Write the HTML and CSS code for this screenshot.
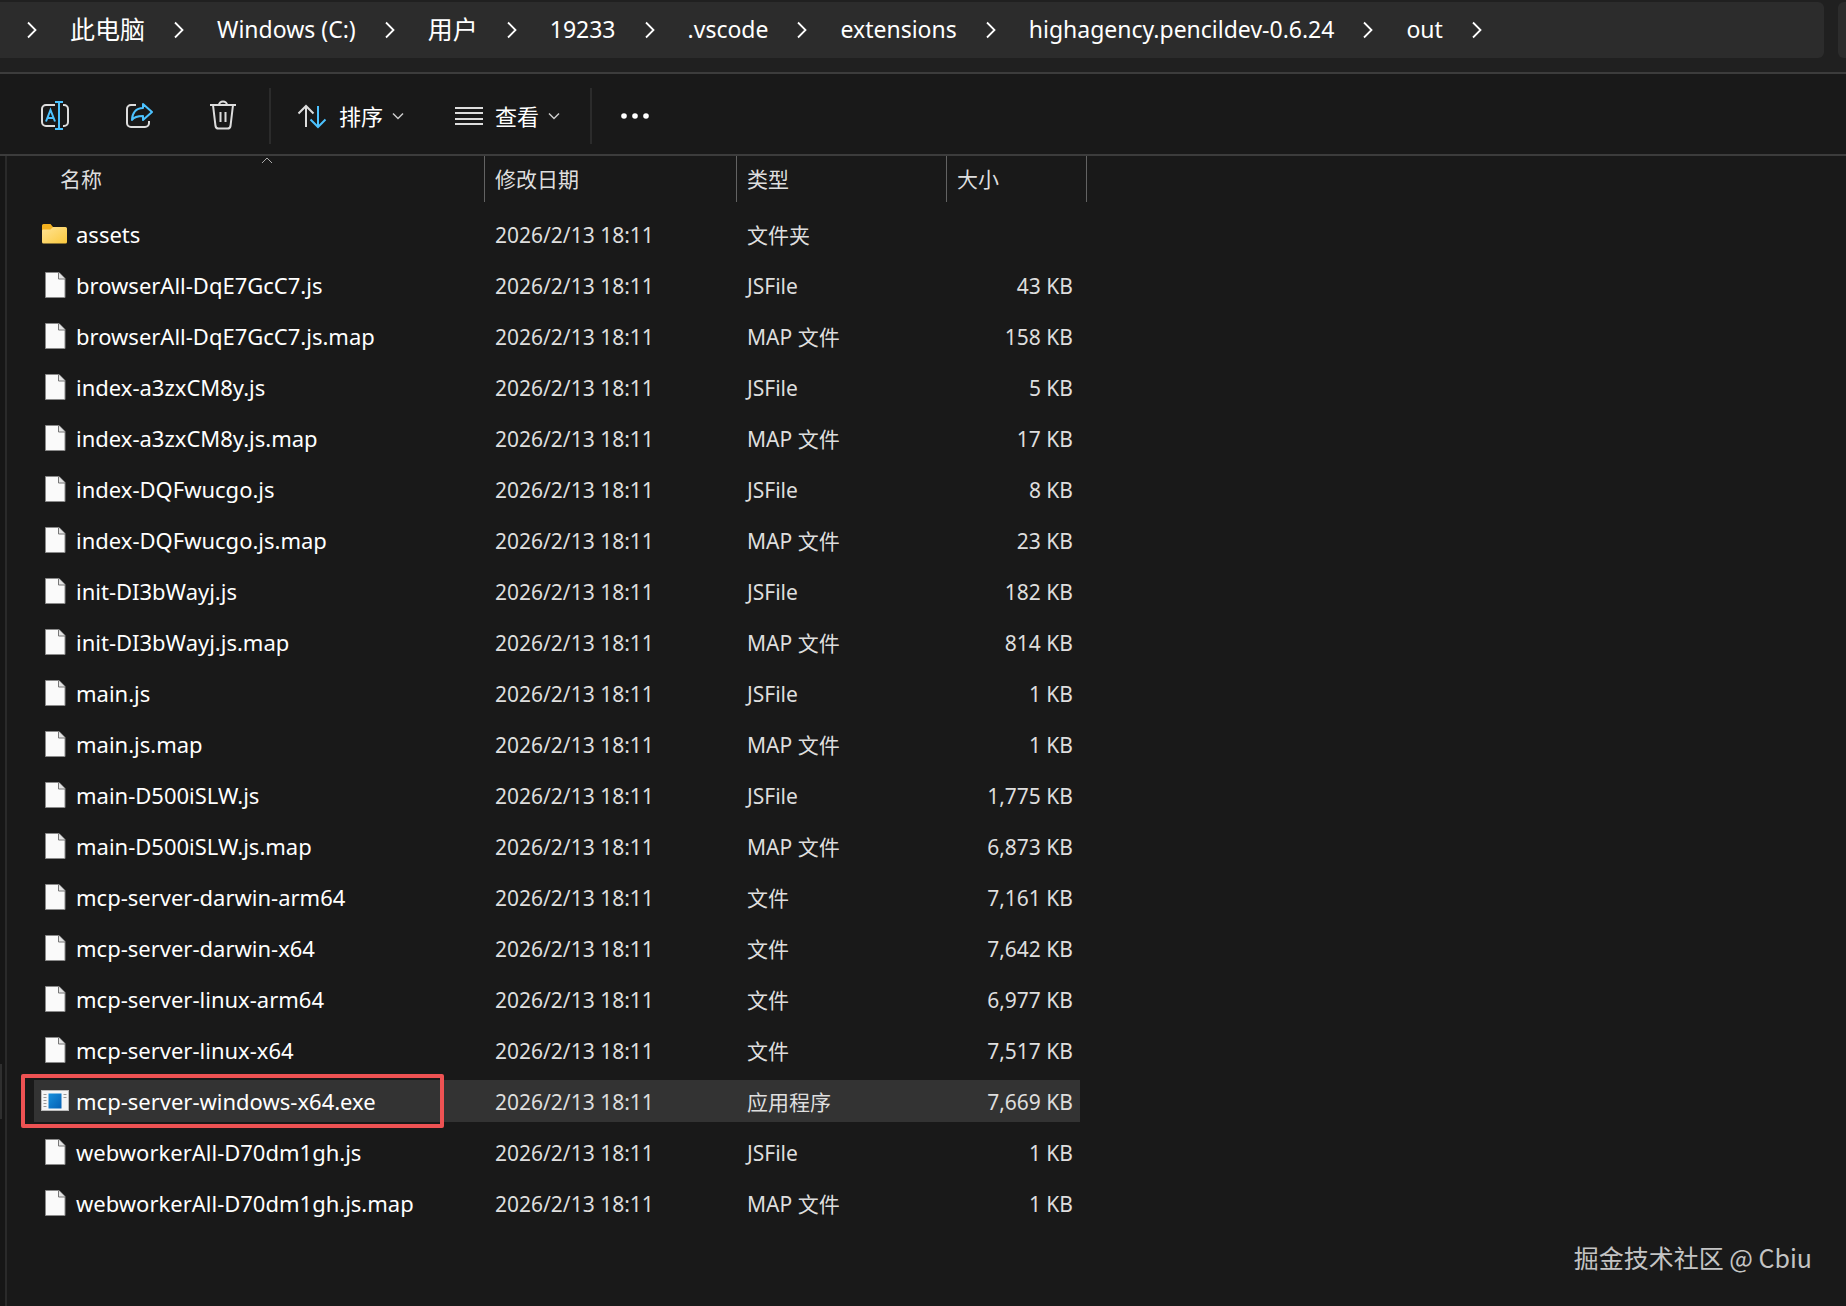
FILE: index.html
```
<!DOCTYPE html>
<html lang="zh-CN">
<head>
    <meta charset="UTF-8">
    <meta name="viewport" content="width=device-width, initial-scale=1.0">
    <title>out</title>
    <link rel="stylesheet" href="styles.css">
</head>
<body>
    <!-- icons shared by the rows and the path -->
    <svg class="sprite" aria-hidden="true">
        <symbol id="chevron" viewBox="0 0 10 18"><path d="M1 1.500L8.500 9L1 16.500" fill="none" stroke="#fff" stroke-width="1.800"/></symbol>
        <symbol id="down" viewBox="0 0 12 8"><path d="M1 1.500L6 6.500L11 1.500" fill="none" stroke="#ccc" stroke-width="1.500"/></symbol>
        <symbol id="file" viewBox="0 0 28 28">
            <path d="M4.500 1.500H18L24 7.500V26.500H4.500Z" fill="#fafafa" stroke="#8a8a8a"/>
            <path d="M17.500 1.500V8H24" fill="#e4e4e4" stroke="#777"/>
        </symbol>
        <symbol id="folder" viewBox="0 0 28 28">
            <path d="M1 5.500a1.500 1.500 0 0 1 1.500-1.500H9.500L12 7H24V14H1Z" fill="#f3b11f"/>
            <path d="M1 10.500a1.500 1.500 0 0 1 1.500-1H9.500L12 7H24.500A1.500 1.500 0 0 1 26 8.500V22a1.500 1.500 0 0 1-1.500 1.500h-22A1.500 1.500 0 0 1 1 22Z" fill="url(#fold)"/>
        </symbol>
        <symbol id="exe" viewBox="0 0 28 28">
            <rect x=".5" y="3.500" width="27" height="20" fill="#f5f5f5" stroke="#bbb"/>
            <rect x="7.500" y="6.500" width="13" height="15" fill="url(#blue)"/>
            <path d="M2.500 7.500h3M2.500 10.500h3M2.500 13.500h3M2.500 16.500h3M2.500 19.500h3M22.500 7.500h3M22.500 10.500h3" stroke="#999"/>
        </symbol>
        <linearGradient id="fold" x1="0" y1="0" x2="1" y2="1"><stop offset="0" stop-color="#ffe394"/><stop offset="1" stop-color="#fbc93d"/></linearGradient>
        <linearGradient id="blue" x1="0" y1="0" x2="1" y2="1"><stop offset="0" stop-color="#1890dc"/><stop offset="1" stop-color="#0560b4"/></linearGradient>
    </svg>

    <header class="address">
        <nav class="path">
            <svg class="sep"><use href="#chevron"/></svg>
            <a class="cn" href="#">此电脑</a><svg class="sep"><use href="#chevron"/></svg>
            <a href="#">Windows (C:)</a><svg class="sep"><use href="#chevron"/></svg>
            <a class="cn" href="#">用户</a><svg class="sep"><use href="#chevron"/></svg>
            <a href="#">19233</a><svg class="sep"><use href="#chevron"/></svg>
            <a href="#">.vscode</a><svg class="sep"><use href="#chevron"/></svg>
            <a href="#">extensions</a><svg class="sep"><use href="#chevron"/></svg>
            <a href="#">highagency.pencildev-0.6.24</a><svg class="sep"><use href="#chevron"/></svg>
            <a href="#">out</a><svg class="sep"><use href="#chevron"/></svg>
        </nav>
        <div class="search"></div>
    </header>

    <div class="toolbar">
        <button class="tool" aria-label="重命名">
            <svg width="30" height="34" viewBox="0 0 30 34" fill="none" stroke="#ddd" stroke-width="2">
                <path d="M15 6H6a4 4 0 0 0-4 4V23a4 4 0 0 0 4 4H15M23 6h1a4 4 0 0 1 4 4V23a4 4 0 0 1-4 4H23"/>
                <path d="M6 22.500L10.500 11L15 22.500M7.500 19H13.500M15 3H23M15 30H23M19 3V30" stroke="#4cc2ff"/>
            </svg>
        </button>
        <button class="tool" aria-label="共享">
            <svg width="30" height="34" viewBox="0 0 30 34" fill="none" stroke="#ddd" stroke-width="2">
                <path d="M12 6H7a4 4 0 0 0-4 4V24a4 4 0 0 0 4 4H21a4 4 0 0 0 4-4V22"/>
                <path d="M19 5L28 13L19 21V17C14 17 10 18 8 21C8 14 12 9 19 9Z" stroke="#4cc2ff" stroke-linejoin="round"/>
            </svg>
        </button>
        <button class="tool" aria-label="删除">
            <svg width="30" height="34" viewBox="0 0 30 34" fill="none" stroke="#ddd" stroke-width="2">
                <path d="M2 6H28M5 6L7.500 27a3 3 0 0 0 3 2.500H19.500a3 3 0 0 0 3-2.500L25 6M11 6a4 3.500 0 0 1 8 0M12.500 13V23M17.500 13V23"/>
            </svg>
        </button>
        <span class="line"></span>
        <button class="menu sort">
            <svg width="30" height="28" viewBox="0 0 30 28" fill="none" stroke="#ddd" stroke-width="2">
                <path d="M9 25V4M1.500 11.500L9 4L16.500 11.500"/>
                <path d="M21 4V25M13.500 17.500L21 25L28.500 17.500" stroke="#4cc2ff"/>
            </svg>
            排序
            <svg class="down"><use href="#down"/></svg>
        </button>
        <button class="menu view">
            <svg width="28" height="20" viewBox="0 0 28 20" stroke="#ddd" stroke-width="2"><path d="M0 2H28M0 7H28M0 13H28M0 18H28"/></svg>
            查看
            <svg class="down"><use href="#down"/></svg>
        </button>
        <span class="line"></span>
        <button class="more" aria-label="更多">
            <svg width="30" height="6" viewBox="0 0 30 6" fill="#fff"><circle cx="4" cy="3" r="2.800"/><circle cx="15" cy="3" r="2.800"/><circle cx="26" cy="3" r="2.800"/></svg>
        </button>
    </div>

    <main class="content">
        <div class="pane"><div class="thumb"></div></div>
        <table class="files">
            <colgroup><col class="c-name"><col class="c-date"><col class="c-type"><col class="c-size"></colgroup>
            <thead>
                <tr>
                    <th><button class="first">名称<svg class="asc" viewBox="0 0 12 8"><path d="M1 7L6 2L11 7" fill="none" stroke="#aaa"/></svg></button></th>
                    <th><button>修改日期</button></th>
                    <th><button>类型</button></th>
                    <th><button>大小</button></th>
                </tr>
            </thead>
            <tbody>
                <tr><td><svg class="icon"><use href="#folder"/></svg>assets</td><td>2026/2/13 18:11</td><td>文件夹</td><td></td></tr>
                <tr><td><svg class="icon"><use href="#file"/></svg>browserAll-DqE7GcC7.js</td><td>2026/2/13 18:11</td><td>JSFile</td><td>43 KB</td></tr>
                <tr><td><svg class="icon"><use href="#file"/></svg>browserAll-DqE7GcC7.js.map</td><td>2026/2/13 18:11</td><td>MAP 文件</td><td>158 KB</td></tr>
                <tr><td><svg class="icon"><use href="#file"/></svg>index-a3zxCM8y.js</td><td>2026/2/13 18:11</td><td>JSFile</td><td>5 KB</td></tr>
                <tr><td><svg class="icon"><use href="#file"/></svg>index-a3zxCM8y.js.map</td><td>2026/2/13 18:11</td><td>MAP 文件</td><td>17 KB</td></tr>
                <tr><td><svg class="icon"><use href="#file"/></svg>index-DQFwucgo.js</td><td>2026/2/13 18:11</td><td>JSFile</td><td>8 KB</td></tr>
                <tr><td><svg class="icon"><use href="#file"/></svg>index-DQFwucgo.js.map</td><td>2026/2/13 18:11</td><td>MAP 文件</td><td>23 KB</td></tr>
                <tr><td><svg class="icon"><use href="#file"/></svg>init-DI3bWayj.js</td><td>2026/2/13 18:11</td><td>JSFile</td><td>182 KB</td></tr>
                <tr><td><svg class="icon"><use href="#file"/></svg>init-DI3bWayj.js.map</td><td>2026/2/13 18:11</td><td>MAP 文件</td><td>814 KB</td></tr>
                <tr><td><svg class="icon"><use href="#file"/></svg>main.js</td><td>2026/2/13 18:11</td><td>JSFile</td><td>1 KB</td></tr>
                <tr><td><svg class="icon"><use href="#file"/></svg>main.js.map</td><td>2026/2/13 18:11</td><td>MAP 文件</td><td>1 KB</td></tr>
                <tr><td><svg class="icon"><use href="#file"/></svg>main-D500iSLW.js</td><td>2026/2/13 18:11</td><td>JSFile</td><td>1,775 KB</td></tr>
                <tr><td><svg class="icon"><use href="#file"/></svg>main-D500iSLW.js.map</td><td>2026/2/13 18:11</td><td>MAP 文件</td><td>6,873 KB</td></tr>
                <tr><td><svg class="icon"><use href="#file"/></svg>mcp-server-darwin-arm64</td><td>2026/2/13 18:11</td><td>文件</td><td>7,161 KB</td></tr>
                <tr><td><svg class="icon"><use href="#file"/></svg>mcp-server-darwin-x64</td><td>2026/2/13 18:11</td><td>文件</td><td>7,642 KB</td></tr>
                <tr><td><svg class="icon"><use href="#file"/></svg>mcp-server-linux-arm64</td><td>2026/2/13 18:11</td><td>文件</td><td>6,977 KB</td></tr>
                <tr><td><svg class="icon"><use href="#file"/></svg>mcp-server-linux-x64</td><td>2026/2/13 18:11</td><td>文件</td><td>7,517 KB</td></tr>
                <tr class="selected"><td><svg class="icon"><use href="#exe"/></svg>mcp-server-windows-x64.exe<span class="mark"></span></td><td>2026/2/13 18:11</td><td>应用程序</td><td>7,669 KB</td></tr>
                <tr><td><svg class="icon"><use href="#file"/></svg>webworkerAll-D70dm1gh.js</td><td>2026/2/13 18:11</td><td>JSFile</td><td>1 KB</td></tr>
                <tr><td><svg class="icon"><use href="#file"/></svg>webworkerAll-D70dm1gh.js.map</td><td>2026/2/13 18:11</td><td>MAP 文件</td><td>1 KB</td></tr>
            </tbody>
        </table>
    </main>
    <div class="watermark">掘金技术社区 @ Cbiu</div>
</body>
</html>
```
FILE: styles.css
```
* { box-sizing: border-box; }
body { display: flex; flex-direction: column; min-height: 100vh; margin: 0; background: #191919; color: #fff; font: 21px/28px "Noto Sans", "Noto Sans CJK SC", sans-serif; }
button { padding: 0; border: 0; background: none; color: inherit; font: inherit; }
svg { flex: none; }
.sprite { position: absolute; width: 0; height: 0; }

.address { display: flex; gap: 14px; height: 74px; padding-top: 2px; background: #202020; border-bottom: 2px solid #3c3c3c; }
.path { display: flex; align-items: center; flex: 1; height: 56px; padding-left: 27px; background: #2c2c2c; border-radius: 0 6px 6px 0; font-size: 23px; white-space: nowrap; }
.path a { padding: 0 29px 2px 33px; color: inherit; text-decoration: none; }
.path .cn { font-size: 25px; }
.sep { width: 10px; height: 18px; }
.search { width: 8px; height: 56px; background: #2c2c2c; border-radius: 6px 0 0 6px; }

.toolbar { display: flex; align-items: center; height: 82px; padding: 4px 0 0 40px; border-bottom: 2px solid #3c3c3c; font-size: 22px; }
.tool { width: 30px; height: 34px; margin-right: 54px; }
.tool svg { display: block; }
.line { width: 2px; height: 56px; background: #2b2b2b; }
.tool + .line { margin-left: -23px; }
.menu { display: flex; align-items: center; }
.menu svg:first-child { margin-right: 12px; }
.down { width: 12px; height: 8px; margin-left: 9px; }
.sort { margin: 0 51px 0 26px; }
.view { margin-right: 30px; }
.more { display: flex; margin-left: 28px; }

.content { display: flex; align-items: stretch; flex: 1; }
.pane { flex: none; width: 7px; margin-right: 27px; background: #161616; border-right: 2px solid #2a2a2a; }
.thumb { width: 2px; height: 55px; margin-top: 908px; background: #2f2f2f; }
.files { width: 1053px; height: 0; table-layout: fixed; border-collapse: separate; border-spacing: 0; }
.c-name { width: 451px; }
.c-date { width: 252px; }
.c-type { width: 210px; }
.c-size { width: 140px; }
.files th { height: 53px; padding: 0; vertical-align: top; font-weight: normal; }
.files th button { position: relative; display: block; width: 100%; height: 46px; padding-left: 10px; border-right: 1px solid #636363; color: #dedede; text-align: left; }
.files th .first { padding-left: 26px; }
.asc { position: absolute; left: 227px; top: 0; width: 12px; height: 8px; }
.files td { height: 51px; padding: 2px 0 0 10px; border: solid transparent; border-width: 4px 0 5px; background-clip: padding-box; color: #dedede; }
.files td:first-child { position: relative; padding: 0 0 0 7px; color: #fff; font-size: 22px; }
.files td:last-child { padding-right: 7px; border-right-width: 7px; text-align: right; }
.icon { width: 28px; height: 28px; margin-right: 7px; vertical-align: -5px; }
.files .selected td { background-color: #333; }
.mark { position: absolute; left: -13px; top: -6px; width: 423px; height: 54px; border: 4px solid #ee5253; border-radius: 2px; }

.watermark { position: absolute; right: 34px; bottom: 31px; color: #c4c4c4; font: 25px/36px "Noto Sans CJK SC", sans-serif; }
```
